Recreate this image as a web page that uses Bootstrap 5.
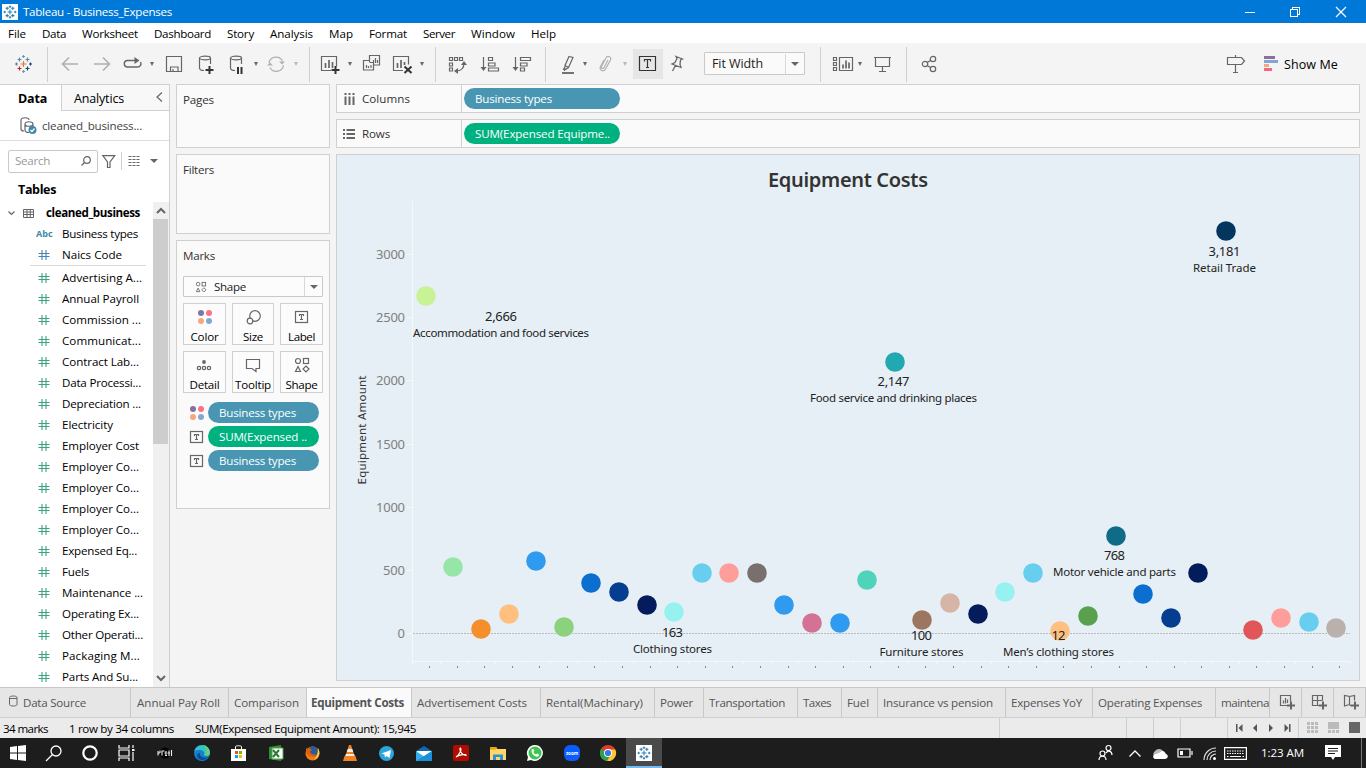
<!DOCTYPE html>
<html lang="en">
<head>
<meta charset="utf-8">
<title>Tableau - Business_Expenses</title>
<link href="https://cdn.jsdelivr.net/npm/bootstrap@5.3.0/dist/css/bootstrap.min.css" rel="stylesheet">
<style>
html, body { height: 100%; }
body { font: 11.6px/16px "Open Sans", "Noto Sans", sans-serif; color: #000; background: #f4f4f4; width: 1366px; height: 768px; overflow: hidden; }
svg { display: block; overflow: visible; }
svg.ln { fill: none; stroke: #666; stroke-width: 1.2; }
svg.faint { stroke: #b0b0b0; }
[data-w] { white-space: nowrap; }
.titlebar { height: 23px; background: #0078d7; color: #fff; padding-left: 2px; }
.menubar { height: 20px; background: #fff; padding-left: 8px; display: grid; align-items: center; padding-top: 1px;
  grid-template-columns: 34px 40px 72px 73px 43px 59px 40px 54px 48px 60px 1fr; }
.toolbar { height: 41px; padding: 11px 0 0 14px; display: grid; align-items: start; justify-items: start;
  grid-template-columns: 33px 13px 32px 31px 27px 15px 33px 31px 25px 13px 27px 15px 11px 28px 14px 30px 28px 15px 13px 32px 32px 33px 15px 23px 14px 26px 10px 36px 35px 116px 12px 26px 15px 33px 14px 306px 38px 1fr; }
.vsep { width: 1px; height: 35px; background: #d0d0d0; margin-top: -7px; }
.vsep.short { height: 18px; margin: 0 0 0 5px; }
.caret { width: 0; height: 0; border: 2.5px solid transparent; border-top: 4px solid #666; border-bottom: 0; margin-top: 8px; }
.caret.off { border-top-color: #b8b8b8; }
.caret.wide { border-width: 4px 4px 0; margin-top: 0; }
.pressed { width: 30px; height: 30px; background: #e6e6e6; margin-top: -5px; padding: 5px; }
.combo { background: #fafafa; border: 1px solid #c9c9c9; border-radius: 1px; color: #222; }
.combo .drop { width: 19px; border-left: 1px solid #d8d8d8; }
.fitbox { width: 101px; height: 23px; margin-top: -2px; padding: 1px 0 0 7px; }
.fitbox span:first-child { font-size: 12.5px; }
.showme { font-size: 12.5px; line-height: 21px; }
.work { height: 603px; }
.side { width: 170px; background: #fff; border-right: 1px solid #d0d0d0; border-top: 1px solid #d0d0d0; }
.tabrow { height: 26px; }
.tabrow .on { width: 61px; padding: 1px 0 0 18px; font-size: 12.5px; }
.tabrow .off { background: #f8f8f8; border-left: 1px solid #d0d0d0; border-bottom: 1px solid #d0d0d0; padding: 2px 6px 0 12px; font-size: 12.5px; }
.source { height: 30px; border-bottom: 1px solid #dedede; padding-left: 20px; color: #444; }
.finder { height: 40px; padding-left: 8px; }
.searchbox { width: 90px; height: 23px; border: 1px solid #c9c9c9; border-radius: 2px; color: #999; padding: 0 6px; }
.heading { height: 21px; padding-left: 18px; font-size: 12.5px; font-weight: 700; line-height: 17px; }
.tree { width: 153px; height: 485px; overflow: hidden; }
.field { height: 21px; padding-left: 36px; }
.field.root { padding: 1px 0 0 8px; }
.field .kind { width: 26px; flex: none; }
.abc { color: #4187ab; font-weight: 700; font-size: 9px; }
.rule { height: 1px; background: #dadada; margin: 0 7px 1px 30px; }
.scroller { width: 16px; height: 485px; background: #f0f0f0; }
.thumb { width: 15px; height: 225px; background: #cdcdcd; }
.shelves { gap: 6px; width: 154px; margin-left: 6px; }
.canvas { gap: 6px; margin-left: 6px; }
.shelfcard { width: 154px; background: #fafafa; border: 1px solid #d0d0d0; color: #333; padding: 7px 6px 0; }
.pages { height: 64px; }
.filters { height: 80px; }
.marks { height: 269px; }
.typebox { height: 21px; margin-top: 12px; background: #fcfcfc; }
.typebox .drop { width: 18px; }
.marksgrid { display: grid; grid-template-columns: 43px 42px 43px; column-gap: 6px; row-gap: 6px; margin-top: 6px; }
.marksgrid > div { height: 42px; border: 1px solid #d0d0d0; background: #fcfcfc; color: #000; padding: 4px 0 0 0; display: flex; flex-direction: column; align-items: center; gap: 2px; }
.encodings { gap: 3px; padding: 9px 0 0 7px; }
.pill { background: #4996b2; color: #fff; border-radius: 11px; height: 21px; line-height: 22px; padding-left: 11px; }
.pill.green { background: #00b180; }
.pill.sm { width: 111px; }
.pill.lg { width: 156px; margin-left: 2px; }
.shelf { height: 29px; width: 1024px; background: #fafafa; border: 1px solid #d0d0d0; color: #333; }
.shelf .name { width: 125px; height: 27px; border-right: 1px solid #d0d0d0; padding-left: 6px; }
.viz { width: 1024px; height: 527px; background: #e6eff5; border: 1px solid #d0d0d0; }
.sheets { height: 31px; border-top: 1px solid #c8c8c8; border-bottom: 1px solid #d0d0d0; background: #e6e6e6; color: #555; display: grid;
  grid-template-columns: 131px 98px 78px 105px 129px 114px 49px 94px 44px 36px 128px 87px 123px 54px 32px 32px 32px; }
.sheets > div { border-right: 1px solid #c8c8c8; padding: 1px 0 0 5px; display: flex; align-items: center; }
.sheets > .wide { padding-left: 6px; }
.sheets > .on { background: #fafafa; font-weight: 700; padding-left: 4px; }
.statusbar { height: 20px; background: #ebebeb; padding-left: 3px; display: grid; grid-template-columns: 66px 126px 804px 127px 27px 27px 47px 71px 1fr; }
.statusbar span { padding-top: 3px; }
.statusbar .seg { border-left: 1px solid #cfcfcf; height: 20px; }
.taskbar { height: 30px; background: #1d1d1d; color: #fff; display: grid; align-items: center; justify-items: center;
  grid-template-columns: 36px 36px 36px 36px 40px 36px 37px 37px 37px 37px 37px 37px 37px 37px 37px 37px 36px 38px 422px 38px 22px 28px 22px 26px 26px 69px 32px 25px; }
.taskbar .active { background: #4a4a4a; width: 36px; height: 30px; border-bottom: 2px solid #76b9ed; padding: 7px 0 0 10px; justify-self: start; }
.deskline { width: 1px; height: 30px; background: #777; }
</style>
</head>
<body class="d-flex flex-column">
<svg width="0" height="0" class="position-absolute">
  <defs>
    <g id="tlogo"><path d="M8 5v6M5 8h6M4.500 1.500v4M2.500 3.500h4M11.500 1.500v4M9.500 3.500h4M4.500 10.500v4M2.500 12.500h4M11.500 10.500v4M9.500 12.500h4M8 0v3M6.500 1.500h3M8 13v3M6.500 14.500h3M1.500 6.500v3M0 8h3M14.500 6.500v3M13 8h3"/></g>
    <g id="hash"><path d="M3.500 0v10M7.500 0v10M0 3.500h11M0 6.500h11" fill="none" stroke-width="1.1"/></g>
    <g id="four" stroke="none"><circle cx="3" cy="3" r="3" fill="#8074a0"/><circle cx="11" cy="3" r="3" fill="#fb7185"/><circle cx="3" cy="11" r="3" fill="#f7a77d"/><circle cx="11" cy="11" r="3" fill="#85a8d0"/></g>
    <g id="tbox"><rect x=".5" y=".5" width="12" height="11" fill="none"/><path d="M4.500 5V3.500h4V5M6.500 3.500v5M5 8.500h3" fill="none"/></g>
    <g id="shapes"><circle cx="3" cy="3" r="2.500"/><rect x="8.500" y=".5" width="5" height="5"/><path d="M3 8.500L.5 13.500h5zM11 8l3 3-3 3-3-3z"/></g>
  </defs>
</svg>

<div class="titlebar d-flex align-items-center">
  <svg width="16" height="16" viewBox="0 0 16 16"><rect width="16" height="16" fill="#fff"/><use href="#tlogo" transform="translate(1.500 1.500) scale(.81)" stroke="#2d7fae" stroke-width="1.300"/></svg>
  <span data-w="150" class="ms-1 me-auto">&#8202;Tableau - Business_Expenses</span>
  <svg width="122" height="14" viewBox="0 0 122 14" fill="none" stroke="#fff"><path d="M1 7.500h10M46.500 4.500h7v7h-7zM48.500 4V2.500h7v7H54" shape-rendering="crispEdges"/><path d="M92 2l10 10M102 2l-10 10" stroke-width="1.200"/></svg>
</div>

<nav class="menubar">
  <span data-w="18">File</span><span data-w="24">Data</span><span data-w="56">Worksheet</span><span data-w="57">Dashboard</span><span data-w="27">Story</span><span data-w="43">Analysis</span><span data-w="24">Map</span><span data-w="38">Format</span><span data-w="32">Server</span><span data-w="44">Window</span><span data-w="25">Help</span>
</nav>

<div class="toolbar">
  <svg width="20" height="20" fill="none" stroke-width="1.200"><path d="M9.500 7v6M6.500 10h6" stroke="#e8762d"/><path d="M5.500 3.500v4M3.500 5.500h4M13.500 3.500v4M11.500 5.500h4" stroke="#5c8ba8"/><path d="M5.500 12.500v4M3.500 14.500h4" stroke="#c72035"/><path d="M13.500 12.500v4M11.500 14.500h4" stroke="#1f457e"/><path d="M9.500 1v3M8 2.500h3M9.500 16v3M8 17.500h3" stroke="#7199a6"/><path d="M2.500 8.500v3M1 10h3" stroke="#59879b"/><path d="M16.500 8.500v3M15 10h3" stroke="#1f457e"/></svg>
  <i class="vsep"></i>
  <svg class="ln faint" width="20" height="20"><path d="M18 10H3M9 3.500L2.500 10 9 16.500" stroke-width="1.600"/></svg>
  <svg class="ln faint" width="20" height="20"><path d="M2 10h15M11 3.500l6.500 6.500-6.500 6.500" stroke-width="1.600"/></svg>
  <svg class="ln" width="20" height="20"><path d="M13 6.500H4a3.300 3.300 0 000 6.500h10.500a3.300 3.300 0 003-5" stroke-width="1.400"/><path d="M11.500 3l5 3.500-5 3.500z" fill="#666" stroke="none"/></svg>
  <i class="caret"></i>
  <svg class="ln" width="20" height="20"><path d="M1.500 2.500h15v15h-15zM5.500 17v-4h7.500v4M8 17v-2"/></svg>
  <svg class="ln" width="20" height="20"><ellipse cx="7" cy="4" rx="5.500" ry="1.800"/><path d="M1.500 4v10c0 1.500 2 2.500 4.500 2.500M12.500 4v6"/><path d="M11.500 12v8M7.500 16h8" stroke="#333" stroke-width="2"/></svg>
  <svg class="ln" width="20" height="20"><ellipse cx="7" cy="4" rx="5.500" ry="1.800"/><path d="M1.500 4v10c0 1.500 2 2.500 4.500 2.500M12.500 4v6"/><path d="M9 13v7M12.500 13v7" stroke="#333" stroke-width="2"/></svg>
  <i class="caret"></i>
  <svg class="ln faint" width="20" height="20"><path d="M2 9a7.200 7.200 0 0113.500-2M16.500 11A7.200 7.200 0 013 13.500"/><path d="M12 7.500h6l-3 3zM0 11.500l3-3 3 3z" fill="#b0b0b0" stroke="none"/></svg>
  <i class="caret off"></i>
  <i class="vsep"></i>
  <svg class="ln" width="20" height="20"><path d="M11 16.500H1.500v-14h15v10"/><path d="M5.500 14V9M9 14V6M12.500 14V8" stroke-width="1.700"/><path d="M15.500 12v8M11.500 16h8" stroke="#333" stroke-width="2"/></svg>
  <i class="caret"></i>
  <svg class="ln" width="20" height="20"><path d="M7.500 8V1.500h10V11H12M8 6.500H1.500V16h10V8.500H7.500M4.500 14v-3M6.500 14v-2M9 14v-3M11.500 9V6M13.500 9V4M15.500 9V6"/></svg>
  <svg class="ln" width="20" height="20"><path d="M11 16.500H1.500v-14h15v8"/><path d="M5.500 14V9M9 14V6M12.500 11V8" stroke-width="1.700"/><path d="M12.500 12.500l7 6.500M19.500 12.500l-7 6.500" stroke="#333" stroke-width="2"/></svg>
  <i class="caret"></i>
  <i class="vsep"></i>
  <svg class="ln" width="20" height="20"><path d="M1.500 3.500h3v3h-3zM6.500 3.500h3v3h-3zM11.500 3.500h3v3h-3zM1.500 9h3v3h-3zM1.500 14h3v3h-3zM8 17c5 0 8-3 8-8"/><path d="M6 17l4-3v6zM13 11l3-4 3 4z" fill="#666" stroke="none"/></svg>
  <svg class="ln" width="20" height="20"><path d="M3.500 3v12M8.500 3.500h4v3h-4zM8.500 9h6.500v3H8.500zM8.500 14h10v3h-10z"/><path d="M.5 13h6l-3 4z" fill="#666" stroke="none"/></svg>
  <svg class="ln" width="20" height="20"><path d="M3.500 3v12M8.500 3.500h10v3h-10zM8.500 9h6.500v3H8.500zM8.500 14h4v3h-4z"/><path d="M.5 13h6l-3 4z" fill="#666" stroke="none"/></svg>
  <i class="vsep"></i>
  <svg class="ln" width="20" height="20"><path d="M9 2.500l4 1-4.500 10L4.500 16l.5-4.500zM5 11.500l3.500 2M3 14.500l2 2"/><path d="M2 19h12" stroke-width="1.800"/></svg>
  <i class="caret"></i>
  <svg class="ln faint" width="20" height="20"><path d="M11 6L7 13.500c-1 2-3.500.5-2.500-1.200L9 4c1.500-3 6-1 4.500 2L8.500 15c-1.800 3.500-7 1-5-2.500L7 6"/></svg>
  <i class="caret off"></i>
  <div class="pressed"><svg width="20" height="20" fill="none" stroke="#333" stroke-width="1.200"><path d="M1.500 2.500h16v14h-16zM6.500 7.500v-2h6v2M9.500 5.500v8M8 13.500h3"/></svg></div>
  <svg class="ln" width="20" height="20"><path d="M7 2.500l6.500 2.500-2 1-.5 4.500 1 3-9-3.500 3-1.500L8 4.500zM6.500 11.500L3.500 17" stroke-width="1.300"/></svg>
  <div class="combo fitbox d-flex align-items-center"><span data-w="51" class="me-auto">Fit Width</span><span class="drop h-100 d-flex align-items-center justify-content-center"><i class="caret wide"></i></span></div>
  <i class="vsep"></i>
  <svg class="ln" width="22" height="20"><path d="M1.500 3.500h3v3h-3zM1.500 8.500h3v3h-3zM1.500 13.500h3v3h-3zM7.500 3.500h13v13h-13z"/><path d="M11 14.500v-4M14 14.500v-8M17 14.500v-6" stroke-width="1.700"/></svg>
  <i class="caret"></i>
  <svg class="ln" width="20" height="20"><path d="M1 3.500h17M2.500 3.500v9h14v-9M9.500 12.500v5M6 17.500h7"/></svg>
  <i class="vsep"></i>
  <svg class="ln" width="20" height="20"><circle cx="5" cy="10" r="2.700"/><circle cx="13" cy="5" r="2.700"/><circle cx="13" cy="15" r="2.700"/><path d="M7.300 8.500l3.500-2.200M7.300 11.500l3.500 2.200"/></svg>
  <svg class="ln" width="20" height="20"><path d="M1.500 3.500h14l3 3.500-3 3.500h-14zM9.500 1v2.500M9.500 10.500v8M7 18.500h5"/></svg>
  <div class="d-flex"><svg width="20" height="20"><path d="M0 2h11v3H0z" fill="#8b6f9c"/><path d="M0 6h14v3H0z" fill="#7fa7d0"/><path d="M0 10h5v3H0z" fill="#f7a77d"/><path d="M0 14h8v3H0z" fill="#f8657c"/></svg><span data-w="54" class="showme">Show Me</span></div>
</div>

<div class="work d-flex">
  <aside class="side flex-shrink-0">
    <div class="tabrow d-flex">
      <div class="on fw-bold d-flex align-items-center"><span data-w="29">Data</span></div>
      <div class="off flex-fill d-flex align-items-center"><span data-w="50" class="me-auto">Analytics</span><svg class="ln mb-1" width="7" height="10"><path d="M6 .5L1 5l5 4.500"/></svg></div>
    </div>
    <div class="source d-flex align-items-center"><svg class="ln" width="22" height="18"><path d="M1 3c0-3 8-3 8 0M1 3v9c0 1.500 2 2 3 2M5 7c0-3 8-3 8 0s-8 3-8 0v6c0 2 2 2.500 4 2.500M13 7v3"/><circle cx="12.500" cy="13" r="4" fill="#4187ab" stroke="none"/><path d="M10.500 13l1.500 1.500 2.500-3" stroke="#fff"/></svg><span data-w="100">cleaned_business...</span></div>
    <div class="finder d-flex align-items-center">
      <div class="searchbox d-flex align-items-center"><span data-w="35" class="me-auto">Search</span><svg class="ln" width="10" height="10"><circle cx="6" cy="4" r="3.300"/><path d="M3.500 6.500L.5 9.500"/></svg></div>
      <svg class="ln ms-1" width="14" height="13"><path d="M.8.700h12L8 7v5.500H5.500V7z"/></svg>
      <i class="vsep short"></i>
      <svg class="ln ms-2" width="12" height="10"><path d="M-1.500.5h12M-1.500 3.500h12M-1.500 6.500h12M-1.500 9.500h12" stroke-dasharray="3 1"/></svg>
      <i class="caret wide ms-2"></i>
    </div>
    <div class="heading"><span data-w="38">Tables</span></div>
    <div class="d-flex">
      <div class="tree">
        <div class="field root d-flex align-items-center fw-bold"><svg class="ln" width="7" height="5"><path d="M.5.500l3 3 3-3"/></svg><svg class="ln ms-2 me-1" width="11" height="9"><path d="M.5.500h10v8H.5zM.5 3h10M.5 5.500h10M4 .5v8M7.300.5v8" stroke-width="1"/></svg><span data-w="94" class="ms-2">cleaned_business</span></div>
        <div id="fields"></div>
      </div>
      <div class="scroller"><svg class="ln" width="16" height="17"><path d="M4 11l4-4 4 4" stroke-width="2"/></svg><div class="thumb"></div><svg class="ln" width="16" height="243"><path d="M4 232l4 4 4-4" stroke-width="2"/></svg></div>
    </div>
  </aside>

  <div class="d-flex flex-column flex-shrink-0 shelves">
    <div class="shelfcard pages"><span data-w="31">Pages</span></div>
    <div class="shelfcard filters"><span data-w="31">Filters</span></div>
    <div class="shelfcard marks"><span data-w="32">Marks</span>
      <div class="combo typebox d-flex align-items-center ps-2"><svg class="ln ms-1" width="10" height="10" viewBox="0 0 14 14"><use href="#shapes"/></svg><span data-w="32" class="me-auto ms-2">Shape</span><span class="drop h-100 d-flex align-items-center justify-content-center"><i class="caret wide"></i></span></div>
      <div class="marksgrid">
        <div><svg width="14" height="19"><use href="#four" y="2"/></svg><span data-w="28">Color</span></div>
        <div><svg class="ln" width="15" height="19"><circle cx="9" cy="8" r="5.300"/><circle cx="4" cy="13" r="2.800" fill="#fcfcfc"/></svg><span data-w="20">Size</span></div>
        <div><svg class="ln" width="14" height="19"><use href="#tbox" y="3"/></svg><span data-w="27">Label</span></div>
        <div><svg class="ln" width="15" height="19"><circle cx="7" cy="6" r="1.900" fill="#666" stroke="none"/><circle cx="2" cy="12" r="1.700"/><circle cx="7" cy="12" r="1.700"/><circle cx="12" cy="12" r="1.700"/></svg><span data-w="30">Detail</span></div>
        <div><svg class="ln" width="14" height="19"><path d="M.5 3.500h13v9H10v3l-4-3H.5z"/></svg><span data-w="36">Tooltip</span></div>
        <div><svg class="ln" width="14" height="19"><use href="#shapes" y="2"/></svg><span data-w="32">Shape</span></div>
      </div>
      <div class="d-flex flex-column encodings">
        <div class="d-flex align-items-center"><svg width="18" height="14"><use href="#four"/></svg><div class="pill sm"><span data-w="77">Business types</span></div></div>
        <div class="d-flex align-items-center"><svg class="ln" width="18" height="12"><use href="#tbox"/></svg><div class="pill green sm"><span data-w="88">SUM(Expensed ..</span></div></div>
        <div class="d-flex align-items-center"><svg class="ln" width="18" height="12"><use href="#tbox"/></svg><div class="pill sm"><span data-w="77">Business types</span></div></div>
      </div>
    </div>
  </div>

  <main class="d-flex flex-column canvas">
    <div class="shelf d-flex align-items-center"><div class="name d-flex align-items-center"><svg class="ln" width="19" height="12"><path d="M2.500 3.500V12M6.500 3.500V12M10.500 3.500V12M2.500 0v2M6.500 0v2M10.500 0v2" stroke-width="2"/></svg><span data-w="48">Columns</span></div><div class="pill lg"><span data-w="77">Business types</span></div></div>
    <div class="shelf d-flex align-items-center"><div class="name d-flex align-items-center"><svg class="ln" width="19" height="10"><path d="M0 1h2M0 5h2M0 9h2M3.500 1H12M3.500 5H12M3.500 9H12" stroke-width="1.800"/></svg><span data-w="28">Rows</span></div><div class="pill green lg"><span data-w="135">SUM(Expensed Equipme..</span></div></div>
    <div class="viz"><svg id="plot" width="1022" height="525" viewBox="337 155 1022 525" font-family="'Noto Sans', 'Open Sans', sans-serif"></svg></div>
  </main>
</div>

<div class="sheets">
  <div><svg class="ln ms-1 me-1 mb-1" width="10" height="12"><path d="M.5 2.500v7c0 2 7.500 2 7.500 0v-7c0-2-7.500-2-7.500 0zM.5 3.500h7.500" stroke-width="1"/></svg><span data-w="63">Data Source</span></div>
  <div class="wide"><span data-w="83">Annual Pay Roll</span></div><div><span data-w="65">Comparison</span></div><div class="on"><span data-w="93">Equipment Costs</span></div><div><span data-w="110">Advertisement Costs</span></div><div><span data-w="97">Rental(Machinary)</span></div><div><span data-w="33">Power</span></div><div><span data-w="76">Transportation</span></div><div><span data-w="28">Taxes</span></div><div><span data-w="22">Fuel</span></div><div><span data-w="110">Insurance vs pension</span></div><div><span data-w="71">Expenses YoY</span></div><div><span data-w="104">Operating Expenses</span></div><div><span data-w="48">maintena</span></div>
  <div class="ps-2"><svg class="ln ms-1" width="16" height="16"><path d="M6 10.500H-1.500V.5h10v6M1.500 8.500v-3M3.500 8.500V3M5.500 8V4.500" /><path d="M9 6.500v8M5 10.500h8" stroke-width="2"/></svg></div>
  <div class="ps-2"><svg class="ln ms-1" width="16" height="16"><path d="M5 10.500H-1.500V.5h10v5M3.500.5v10M-1.500 5.500h10"/><path d="M9 6.500v8M5 10.500h8" stroke-width="2"/></svg></div>
  <div class="ps-2"><svg class="ln ms-1" width="16" height="16"><path d="M5 11L3.500 9.500-1.500 11V.5l5 1v8M3.500 1.500L8.500.5v5"/><path d="M9 6.500v8M5 10.500h8" stroke-width="2"/></svg></div>
</div>

<div class="statusbar">
  <span data-w="45">34 marks</span><span data-w="105">1 row by 34 columns</span><span data-w="221">SUM(Expensed Equipment Amount): 15,945</span>
  <i class="seg"></i><i class="seg"></i><i class="seg"></i><i class="seg"></i>
  <div class="seg d-flex align-items-center ps-2"><svg width="56" height="8" fill="#555"><path d="M0 0h1.500v8H0zM6.500 0v8l-4-4zM21 0v8l-4-4zM33 0v8l4-4zM48.500 0v8l4-4zM53 0h1.500v8H53z"/></svg></div>
  <div class="seg d-flex align-items-center ps-2"><svg width="54" height="12" fill="#bbb"><path d="M0 0h3v3H0zM4 0h3v3H4zM8 0h3v3H8zM0 4h3v3H0zM4 4h3v3H4zM8 4h3v3H8zM0 8h3v3H0zM4 8h3v3H4zM8 8h3v3H8zM21 0h11v7H21zM21 8h3v3h-3zM25 8h3v3h-3zM29 8h3v3h-3z"/><path d="M42 0h11v11H42z" fill="#666"/></svg></div>
</div>

<footer class="taskbar">
  <svg width="16" height="16" fill="#fff"><path d="M0 2l7-1v6.500H0zM8 .9L16 0v7.500H8zM0 8.500h7V15l-7-1zM8 8.500h8V16l-8-1z"/></svg>
  <svg width="16" height="16" fill="none" stroke="#fff" stroke-width="1.300"><circle cx="10" cy="6" r="5"/><path d="M6.500 9.500L0 16"/></svg>
  <svg width="16" height="16" fill="none" stroke="#fff" stroke-width="2.200"><circle cx="8" cy="8" r="6.700"/></svg>
  <svg width="17" height="16" fill="none" stroke="#fff" stroke-width="1.200"><path d="M1 0v3h10V0M1 5h10v6H1zM1 16v-3h10v3M15 0v3M15 7v9"/><path d="M14 4h2.500v2H14z" fill="#fff" stroke="none"/></svg>
  <svg width="16" height="16"><circle cx="9" cy="8" r="5.500" fill="#050505"/><path d="M1.500 8h2.500M2 6v4.500M4 5.500v2.500M5.500 6h3M6 6v4.500M9 10.500h2M10 6v4.500M8.500 8h2M13 5.500v5.500M15.500 5v6M11.500 8h2.500" stroke="#eee" fill="none" stroke-width="1.100"/></svg>
  <svg width="16" height="16"><circle cx="8" cy="8" r="8" fill="#1580d0"/><path d="M.3 6A8 8 0 0116 8c0 3-4.500 3.500-6 2 1.500-3-1.500-5-4-5-2.500 0-4.500 0-5.700 1z" fill="#35c1c8"/><path d="M9 .1A8 8 0 0116 8c0 3-4.500 3.500-6 2 4-4 2-7-1-9.900z" fill="#66cf72"/><path d="M6 8c-1 3 3 6 8 4-2 4-10 4-11-1 0-2 1-3 3-3z" fill="#0c4a96"/></svg>
  <svg width="16" height="16"><path d="M0 4h15v12H0z" fill="#fff"/><path d="M4.500 4V1.500c0-1 6-1 6 0V4" fill="none" stroke="#fff"/><path d="M4 6h3v3H4z" fill="#f25022"/><path d="M8 6h3v3H8z" fill="#7fba00"/><path d="M4 10h3v3H4z" fill="#00a4ef"/><path d="M8 10h3v3H8z" fill="#ffb900"/></svg>
  <svg width="16" height="16"><path d="M1 2L13 0v16L1 14z" fill="#2f8f36"/><path d="M4 3h11v11H4z" fill="#fff" stroke="#4aa34a"/><path d="M5 5l6 7M11 5l-6 7" stroke="#267c33" stroke-width="2"/></svg>
  <svg width="15" height="16"><circle cx="7.500" cy="8.500" r="7" fill="#f27b1b"/><circle cx="8" cy="6.500" r="5" fill="#285c98"/><path d="M1 3c2 2 5 0 6 2l-2 1c0 3 3 4 6 3-2 4-9 3-10-2z" fill="#e66000"/><path d="M13 3c3 5 1 10-4 12 3-3 4-7 4-12z" fill="#ffcb3d"/></svg>
  <svg width="14" height="16"><path d="M6 0h2l4 12H2z" fill="#f58220"/><path d="M4.800 4h4.400l1 3H3.800zM3 9h8l.8 2H2.200z" fill="#eee"/><path d="M1.500 11h11l1.500 5H0z" fill="#f58220"/></svg>
  <svg width="15" height="15"><circle cx="7.500" cy="7.500" r="7.500" fill="#2ba5dc"/><path d="M2.500 7.500L12 4l-1.500 8-3-2-1.500 1.500-.5-3z" fill="#fff"/></svg>
  <svg width="16" height="15"><path d="M0 5l8-5 8 5v10H0z" fill="#1267b1"/><path d="M1 5h14v7H1z" fill="#fff"/><path d="M0 5l8 5.500L16 5v10H0z" fill="#34adec"/><path d="M0 15l16-10v10z" fill="#1c8fd9"/></svg>
  <svg width="16" height="16"><rect width="16" height="16" rx="2" fill="#b30b00"/><path d="M3 12c3-2 6-7 4.500-9-1.500 0 0 7 5.500 7.500 1-1.500-6-1.500-10 1.500z" fill="none" stroke="#fff" stroke-width="1.200"/></svg>
  <svg width="16" height="15"><path d="M0 1h6l1.500 2H16v11H0z" fill="#ffd767"/><path d="M0 1h6l1 1.500-1 1H0z" fill="#e7a500"/><path d="M3 14V8.500h10V14h-3v-3H6v3z" fill="#2d8fde"/></svg>
  <svg width="16" height="16"><path d="M8 0a8 8 0 11-4 15L0 16l1-4A8 8 0 018 0z" fill="#fff"/><circle cx="8" cy="8" r="6.500" fill="#3fc351"/><path d="M5 4l1.500 0 .8 2-1 1c.5 1.300 1.500 2 2.700 2.500l1-1 2 1c0 2-1.500 2.500-3 2C6 10.500 3.500 7 5 4z" fill="#fff"/></svg>
  <svg width="16" height="16"><rect width="16" height="16" rx="6" fill="#0b5cff"/><text x="8" y="9.500" font-size="4.500" font-weight="700" text-anchor="middle" fill="#fff">zoom</text></svg>
  <svg width="16" height="16"><circle cx="8" cy="8" r="8" fill="#e33b2e"/><path d="M8 8L1 4a8 8 0 006 12l4-6z" fill="#2ba24c"/><path d="M8 4.500h7.200A8 8 0 017 16l4-6.500z" fill="#fcc934"/><circle cx="8" cy="8" r="4" fill="#fff"/><circle cx="8" cy="8" r="3.100" fill="#3578e5"/></svg>
  <div class="active"><svg width="16" height="16"><rect width="16" height="16" fill="#fff"/><use href="#tlogo" transform="translate(1.500 1.500) scale(.81)" stroke="#2d7fae" stroke-width="1.300"/></svg></div>
  <i></i>
  <svg width="16" height="16" fill="none" stroke="#fff" stroke-width="1.200"><circle cx="11.500" cy="3" r="2.500"/><path d="M9 8c2-3 6-2 6 2M2 15c0-5 7-5 7 0"/><circle cx="5.500" cy="8.500" r="2.500"/></svg>
  <svg width="12" height="7" fill="none" stroke="#fff" stroke-width="1.300"><path d="M.5 6.500L6 1l5.500 5.500"/></svg>
  <svg width="16" height="11"><path d="M4 10a4 4 0 01-1-7 5 5 0 018 0l-5 7z" fill="#bbb"/><path d="M3 11c-3-1-2-5 1-5l3-1 3-2c3 0 3 2 4 3 3 1 2 5-1 5z" fill="#fff"/></svg>
  <svg width="16" height="10" fill="none" stroke="#fff" stroke-width="1.200"><path d="M1 1h12v8H1zM15 3v4"/><path d="M3 3h3v4H3z" fill="#fff" stroke="none"/></svg>
  <svg width="13" height="13" fill="none" stroke="#ddd" stroke-width="1.200"><path d="M1 13A12 12 0 0113 1M4 13a9 9 0 019-9M7 13a6 6 0 016-6"/><circle cx="11.500" cy="11.500" r="1.500" fill="#fff" stroke="none"/></svg>
  <svg width="23" height="13" fill="none" stroke="#fff" stroke-width="1.200"><path d="M.6.600h21.800v11.800H.6z"/><path d="M3 4h17M3 6.500h17" stroke-dasharray="1.500 1"/><path d="M3 9.500h1.500M6 9.500h11M18.500 9.500h1.500"/></svg>
  <span data-w="43">1:23 AM</span>
  <svg width="16" height="16"><path d="M0 0h16v12H10l-2 3-2-3H0z" fill="#fff"/><path d="M3 3.500h10M3 6h10M3 8.500h7" stroke="#1d1d1d"/></svg>
  <i class="deskline"></i>
</footer>

<script src="https://cdn.jsdelivr.net/npm/bootstrap@5.3.0/dist/js/bootstrap.bundle.min.js"></script>
<script>
const fields = [["Business types",76,"abc"],["Naics Code",60,"dim"],null,["Advertising A...",80],["Annual Payroll",77],["Commission ...",79],["Communicat...",79],["Contract Lab...",77],["Data Processi...",79],["Depreciation ...",79],["Electricity",51],["Employer Cost",77],["Employer Co...",77],["Employer Co...",77],["Employer Co...",77],["Employer Co...",77],["Expensed Eq...",75],["Fuels",27],["Maintenance ...",81],["Operating Ex...",77],["Other Operati...",81],["Packaging M...",78],["Parts And Su...",76]];
document.getElementById("fields").innerHTML = fields.map(f => !f ? '<div class="rule"></div>' :
  `<div class="field d-flex align-items-center"><span class="kind">${f[2] === "abc" ? '<span class="abc">Abc</span>' :
  `<svg width="14" height="10" viewBox="-2.500 0 14 10" stroke="${f[2] ? "#4187ab" : "#3da37f"}"><use href="#hash"/></svg>`}</span><span data-w="${f[1]}">${f[0]}</span></div>`).join("");

// marks: x, y, colour
const marks = [[426,296,"#c8f296"],[453,567,"#96e6a7"],[481,629,"#f58f2c"],[509,614,"#ffbf7f"],[536,561,"#2f9bf0"],[564,627,"#8cd17d"],[591,583,"#0c6fd0"],[619,592,"#053d91"],[647,605,"#041b5c"],[674,612,"#96f2ee"],[702,573,"#67cef0"],[729,573,"#ff9d9a"],[757,573,"#79706e"],[784,605,"#2f9bf0"],[812,623,"#d37295"],[840,623,"#2f9bf0"],[867,580,"#50d3bb"],[895,362,"#22a8b0"],[922,620,"#9d7660"],[950,603,"#d7b5a6"],[978,614,"#041b5c"],[1005,592,"#96f2ee"],[1033,573,"#67cef0"],[1060,631,"#ffbf7f"],[1088,616,"#59a14f"],[1116,536,"#106b87"],[1143,594,"#0c6fd0"],[1171,618,"#053d91"],[1198,573,"#041b5c"],[1226,231,"#04355f"],[1253,630,"#e15759"],[1281,618,"#ff9d9a"],[1309,622,"#67cef0"],[1336,628,"#bab0ac"]];
// labels: centre x, value baseline, value, value width, name, name width
const labels = [[501,321,"2,666",32,"Accommodation and food services",176],[893.5,386,"2,147",32,"Food service and drinking places",167],[1224.5,256,"3,181",32,"Retail Trade",63],[672.5,637,"163",21,"Clothing stores",79],[921.5,640,"100",21,"Furniture stores",84],[1058.500,640,"12",14,"Men’s clothing stores",111],[1114.5,560,"768",21,"Motor vehicle and parts",123]];
let s = `<text x="848" y="187" font-size="20" font-weight="600" text-anchor="middle" textLength="160" fill="#333">Equipment Costs</text>
<text transform="translate(366 430) rotate(-90)" font-size="11.500" text-anchor="middle" textLength="109" fill="#333">Equipment Amount</text>
<path d="M412.500 201v463M412 661.500h938" stroke="#f7f7f7" fill="none"/><path d="M413 633.500h937" stroke="#bbb" stroke-dasharray="2 1"/>`;
for (let i = 0; i <= 6; i++) {
  const y = 633.5 - i * 63.15;
  s += `<path d="M407 ${Math.floor(y)}.500h5" stroke="#f7f7f7"/><text x="405" y="${Math.floor(y) + 5}" font-size="13" text-anchor="end" textLength="${i ? (i > 1 ? 29 : 22) : 7}" fill="#808080">${i * 500}</text>`;
}
for (let i = 0; i <= 34; i++) {
  const x = Math.round(412 + i * 27.58);
  s += `<path d="M${x}.500 661v4" stroke="#f7f7f7"/>`;
  if (i < 34) s += `<rect x="${x + 17}" y="666" width="1" height="2" fill="#888"/>`;
}
s += marks.map(m => `<circle cx="${m[0]}" cy="${m[1]}" r="9.800" fill="${m[2]}"/>`).join("");
s += labels.map(l => `<text x="${l[0]}" y="${l[1]}" font-size="13" text-anchor="middle" textLength="${l[3]}" fill="#222">${l[2]}</text><text x="${l[0]}" y="${l[1] + 16}" font-size="11.500" text-anchor="middle" textLength="${l[5]}" fill="#222">${l[4]}</text>`).join("");
document.getElementById("plot").innerHTML = s;

// spread each label over its own advance width
document.querySelectorAll("[data-w]").forEach(el => {
  const r = document.createRange(); r.selectNodeContents(el);
  el.style.letterSpacing = ((el.dataset.w - r.getBoundingClientRect().width) / el.textContent.length).toFixed(3) + "px";
});
</script>
</body>
</html>
